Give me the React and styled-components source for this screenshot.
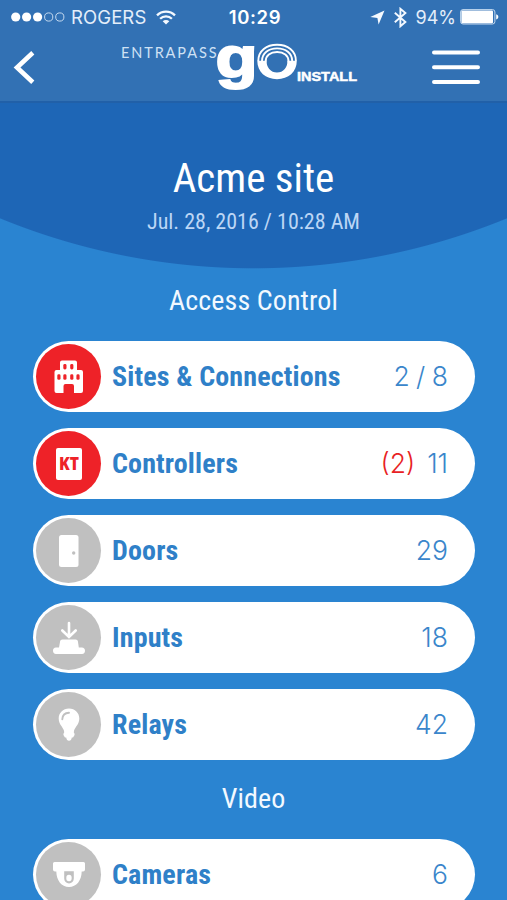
import React from 'react';
import styled, { createGlobalStyle } from 'styled-components';

const GlobalStyle = createGlobalStyle`
  * {
    box-sizing: border-box;
  }

  body {
    margin: 0;
    background: #2a84d1;
  }
`;

const condensed = `
  font-family: 'Roboto Condensed', Roboto, sans-serif;
  font-stretch: 75%;
`;

const Screen = styled.div`
  width: 507px;
  height: 900px;
  overflow: hidden;
  background: #2a84d1;
  font-family: Inter, sans-serif;
`;

const Header = styled.header`
  height: 103px;
  background: #3271b4;
  border-bottom: 2px solid #2160a8;
  color: #fff;
`;

const StatusBar = styled.div`
  display: grid;
  grid-template-columns: 1fr auto 1fr;
  align-items: center;
  height: 34px;
  padding: 0 8px 0 11px;
  font-size: 18.5px;
`;

const StatusGroup = styled.div`
  display: flex;
  align-items: center;
  justify-content: ${({ $end }) => ($end ? 'flex-end' : 'flex-start')};
  color: #e4eefa;
`;

const Carrier = styled.span`
  margin: 0 10px 0 6px;
  letter-spacing: 0.1px;
`;

const Charge = styled.span`
  margin: 0 4px 0 9px;
  font-size: 18px;
`;

const Time = styled.span`
  font-weight: 600;
  font-size: 18.5px;
  letter-spacing: 0.6px;
`;

const NavBar = styled.div`
  display: flex;
  justify-content: space-between;
  height: 67px;
  padding: 0 26px 0 13px;
`;

const IconButton = styled.button`
  display: flex;
  padding: ${({ $top }) => $top}px 0 0;
  border: 0;
  background: none;
`;

const LogoSvg = styled.svg`
  display: block;
  overflow: visible;
`;

const Hero = styled.section`
  display: flex;
  flex-direction: column;
  align-items: center;
  height: 166px;
  padding-top: 51px;
  background: radial-gradient(circle at 50% -502.6px, #1e66b6 667.4px, #2a84d1 668.4px);
`;

const SiteName = styled.h1`
  ${condensed}
  margin: 0;
  font-size: 41px;
  font-weight: 400;
  line-height: 48px;
  color: #fff;
`;

const SyncDate = styled.p`
  ${condensed}
  margin: 7px 0 0;
  font-size: 22px;
  line-height: 26px;
  color: #bcd6f5;
`;

const SectionTitle = styled.h2`
  ${condensed}
  margin: 0;
  height: ${({ $height }) => $height}px;
  padding-top: ${({ $top }) => $top}px;
  font-size: 28px;
  font-weight: 400;
  line-height: 32px;
  letter-spacing: 0.1px;
  text-align: center;
  color: #f2f9ff;
`;

const List = styled.div`
  display: flex;
  flex-direction: column;
  gap: 16px;
  padding: 0 32px 0 33px;
`;

const Row = styled.div`
  display: flex;
  align-items: center;
  height: 71px;
  padding: 0 27px 0 3px;
  border-radius: 36px;
  background: #fff;
`;

const Badge = styled.div`
  display: flex;
  flex: none;
  width: 65px;
  height: 65px;
  border-radius: 50%;
  background: ${({ $alert }) => ($alert ? '#ee2228' : '#c0c0c0')};
`;

const Label = styled.span`
  ${condensed}
  flex: 1;
  margin-left: 11px;
  padding-bottom: 1px;
  font-size: 28px;
  font-weight: 700;
  letter-spacing: 0.15px;
  color: #2f80c8;
`;

const Count = styled.span`
  padding-bottom: 2px;
  font-size: 26.5px;
  font-weight: 350;
  font-kerning: none;
  word-spacing: -1px;
  color: #3a86cb;
`;

const Faults = styled(Count)`
  margin-right: 12px;
  color: #e81f25;
`;

const Signal = () => (
  <svg width="54" height="12" viewBox="0 0 54 12">
    <g fill="#fff">
      <circle cx="4.7" cy="6" r="4.6" />
      <circle cx="15.6" cy="6" r="4.6" />
      <circle cx="26.6" cy="6" r="4.6" />
    </g>
    <g fill="none" stroke="#c5daf0" strokeWidth="1">
      <circle cx="37.7" cy="6" r="4.1" />
      <circle cx="48.8" cy="6" r="4.1" />
    </g>
  </svg>
);

const Wifi = () => (
  <svg width="20" height="15" viewBox="0 0 20 15" fill="none" stroke="#f4f9ff" strokeWidth="2.3">
    <path d="M1 5.4a12.7 12.7 0 0 1 18 0" />
    <path d="M4.1 8.8a8.3 8.3 0 0 1 11.8 0" />
    <path d="M10 14.6 6.7 11.3a4.7 4.7 0 0 1 6.6 0z" fill="#f4f9ff" stroke="none" />
  </svg>
);

const Location = () => (
  <svg width="15" height="15" viewBox="0 0 15 15">
    <path d="M14.5.5 8.6 14.5 7.4 8 .3 7z" fill="#f4f9ff" />
  </svg>
);

const Bluetooth = styled(({ className }) => (
  <svg
    className={className}
    width="13"
    height="21"
    viewBox="0 0 13 21"
    fill="none"
    stroke="#f4f9ff"
    strokeWidth="1.9"
  >
    <path d="M.8 5.8 11.4 15 6.4 19.3V1.8l5 4.2L.8 15.2" />
  </svg>
))`
  margin-left: 9px;
`;

const Battery = () => (
  <svg width="39" height="16" viewBox="0 0 39 16">
    <rect x=".6" y=".6" width="34.3" height="14.4" rx="2.4" fill="none" stroke="#c5daf0" />
    <rect x="1.4" y="1.4" width="31.6" height="12.8" rx="1" fill="#fff" />
    <path d="M36.2 5.2c2.8.8 2.8 4.4 0 5.2z" fill="#fff" />
  </svg>
);

const Logo = () => (
  <LogoSvg width="252" height="67" viewBox="108 34 252 67" fill="#fff">
    <text
      x="121"
      y="57.5"
      fontFamily="Lato, sans-serif"
      fontSize="14.5"
      textLength="95.5"
      fill="#cfe1f4"
    >
      ENTRAPASS
    </text>
    <text
      transform="translate(215.4 77) scale(1.21 1)"
      fontFamily="'Liberation Sans', sans-serif"
      fontSize="57"
      fontWeight="700"
      stroke="#fff"
      strokeWidth="2"
    >
      g
    </text>
    <path d="M257.3 60.8c0 11.2 8.3 18.4 19.7 18.4s19.8-7.2 19.8-18.4h-9.6a10.3 10.3 0 1 1-20.4 0z" />
    <g fill="none" stroke="#fff" strokeWidth="1.9">
      <path d="M258.3 61c0-10.2 8.3-16.2 18.800-16.2s18.800 6 18.800 16.2" />
      <path d="M262 61c0-7.800 6.500-12.600 15.100-12.600s15.100 4.800 15.100 12.600" />
      <path d="M265.700 61c0-5.400 4.600-9 11.400-9s11.400 3.600 11.400 9" />
    </g>
    <text
      transform="translate(297 80.6) scale(1.2 1)"
      fontFamily="'Liberation Sans', sans-serif"
      fontSize="13.3"
      fontWeight="700"
      textLength="50"
      lengthAdjust="spacingAndGlyphs"
      stroke="#fff"
      strokeWidth="0.5"
    >
      INSTALL
    </text>
  </LogoSvg>
);

const ChevronBack = () => (
  <svg width="24" height="36" viewBox="0 0 24 36">
    <path d="M19.8 2.8 4 17.5l15.8 14.8" fill="none" stroke="#fff" strokeWidth="4.6" />
  </svg>
);

const Menu = () => (
  <svg width="50" height="36" viewBox="0 0 50 36" stroke="#fff" strokeWidth="4" strokeLinecap="round">
    <path d="M3 3.5h44M3 18.3h44M3 33h44" />
  </svg>
);

// Badge drawings share one 65x65 box, white on the badge colour
const icons = {
  sites: (
    <>
      <path
        fill="#fff"
        d="M24 18.500q0-2 2-2h13q2 0 2 2v7.500h4q2 0 2 2V47q0 2-2 2h-7v-7q0-2-2-2h-6.500q-2 0-2 2v7h-7q-2 0-2-2V28q0-2 2-2H24z"
      />
      <g fill="#ee2228">
        <rect x="27.3" y="20" width="3.2" height="5.5" rx="1.4" />
        <rect x="34.2" y="20" width="3.2" height="5.5" rx="1.4" />
        <rect x="21.300" y="30.3" width="3.2" height="5.5" rx="1.4" />
        <rect x="27.3" y="30.3" width="3.2" height="5.5" rx="1.4" />
        <rect x="34.2" y="30.3" width="3.2" height="5.5" rx="1.4" />
        <rect x="40.4" y="30.3" width="3.2" height="5.5" rx="1.4" />
      </g>
    </>
  ),
  controllers: (
    <>
      <rect x="20" y="17" width="26" height="32" rx="2" fill="#fff" />
      <text
        x="23"
        y="38.8"
        fill="#ee2228"
        fontFamily="'Open Sans', sans-serif"
        fontSize="17"
        fontWeight="800"
        textLength="20"
        lengthAdjust="spacingAndGlyphs"
      >
        KT
      </text>
    </>
  ),
  doors: (
    <>
      <rect x="23" y="17" width="19.5" height="32" rx="2.5" fill="#fff" />
      <circle cx="37.7" cy="35" r="1.7" fill="#c0c0c0" />
    </>
  ),
  inputs: (
    <>
      <path
        d="M33 18v13M26.3 25.5l6.700 6.500 6.700-6.500"
        fill="none"
        stroke="#fff"
        strokeWidth="2.6"
        strokeLinecap="round"
      />
      <path
        fill="#fff"
        d="M24 37q0-2.500 2.500-2.500h13q2.500 0 2.500 2.500l.8 5.500h3q3.200.3 3.200 3.200T46 49H20q-3-.3-3-3.300t3-3.200h3z"
      />
    </>
  ),
  relays: (
    <>
      <path
        fill="#fff"
        d="M33 16.500c6 0 10.300 4.500 10.300 10 0 6-4 8-5.300 12.300l-.2 1.700q1.500 1.300.5 3L37 45.500h-1.200q-.5 3.200-2.800 3.200t-2.800-3.200H29l-1.300-2q-1-1.700.5-3l-.2-1.700c-1.300-4.300-5.300-6.300-5.300-12.300 0-5.500 4.300-10 10.300-10z"
      />
      <path d="M26.300 27.200q.3-6.200 6.700-6.500" fill="none" stroke="#c0c0c0" strokeWidth="1.9" strokeLinecap="round" />
    </>
  ),
  cameras: (
    <>
      <path
        fill="#fff"
        d="M17 21.500q0-1.500 1.500-1.500h29q1.500 0 1.500 1.500v6q0 2-2 2h-1.300C45.500 38.500 40.500 45 33 45s-12.500-6.500-12.700-15.500H19q-2 0-2-2z"
      />
      <path d="M28.200 29.300h9.600v7.200a4.800 5 0 0 1-9.600 0z" fill="#c0c0c0" />
      <ellipse cx="33" cy="36" rx="2.700" ry="3.200" fill="#fff" />
    </>
  ),
};

const accessControl = [
  { icon: 'sites', label: 'Sites & Connections', count: '2 / 8', alert: true },
  { icon: 'controllers', label: 'Controllers', count: '11', faults: '(2)', alert: true },
  { icon: 'doors', label: 'Doors', count: '29' },
  { icon: 'inputs', label: 'Inputs', count: '18' },
  { icon: 'relays', label: 'Relays', count: '42' },
];

const video = [{ icon: 'cameras', label: 'Cameras', count: '6' }];

const DeviceList = ({ items }) => (
  <List>
    {items.map(({ icon, label, count, faults, alert }) => (
      <Row key={icon}>
        <Badge $alert={alert}>
          <svg width="65" height="65" viewBox="0 0 65 65">
            {icons[icon]}
          </svg>
        </Badge>
        <Label>{label}</Label>
        {faults && <Faults>{faults}</Faults>}
        <Count>{count}</Count>
      </Row>
    ))}
  </List>
);

const App = () => (
  <Screen>
    <GlobalStyle />
    <Header>
      <StatusBar>
        <StatusGroup>
          <Signal />
          <Carrier>ROGERS</Carrier>
          <Wifi />
        </StatusGroup>
        <Time>10:29</Time>
        <StatusGroup $end>
          <Location />
          <Bluetooth />
          <Charge>94%</Charge>
          <Battery />
        </StatusGroup>
      </StatusBar>
      <NavBar>
        <IconButton $top={16} aria-label="Back">
          <ChevronBack />
        </IconButton>
        <Logo />
        <IconButton $top={15} aria-label="Menu">
          <Menu />
        </IconButton>
      </NavBar>
    </Header>
    <Hero>
      <SiteName>Acme site</SiteName>
      <SyncDate>Jul. 28, 2016 / 10:28 AM</SyncDate>
    </Hero>
    <SectionTitle $height={72} $top={16}>
      Access Control
    </SectionTitle>
    <DeviceList items={accessControl} />
    <SectionTitle $height={79} $top={23}>
      Video
    </SectionTitle>
    <DeviceList items={video} />
  </Screen>
);

export default App;
